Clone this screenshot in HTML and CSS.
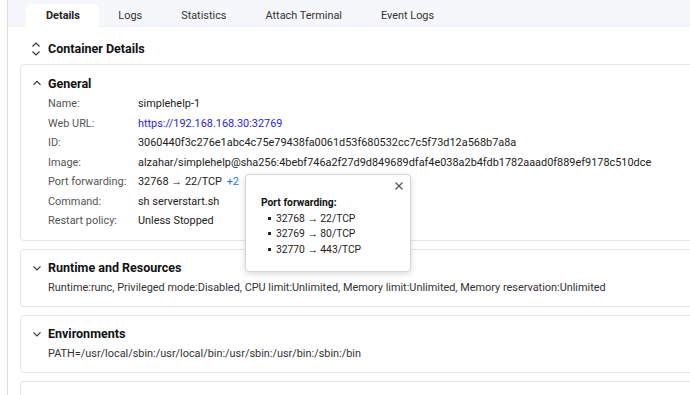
FILE: index.html
```html
<!DOCTYPE html>
<html lang="en">
<head>
    <meta charset="UTF-8">
    <meta name="viewport" content="width=device-width, initial-scale=1.0">
    <title>Container simplehelp-1</title>
    <link rel="stylesheet" href="styles.css">
</head>
<body>
    <div class="panel">
        <div class="tabs">
            <button class="tab active">Details</button>
            <button class="tab">Logs</button>
            <button class="tab">Statistics</button>
            <button class="tab">Attach Terminal</button>
            <button class="tab">Event Logs</button>
        </div>

        <div class="page-title">
            <svg class="expand-icon" width="10" height="16" viewBox="0 0 10 16">
                <path d="M1.5 5.5 L5 2 L8.5 5.5 M1.5 10.5 L5 14 L8.5 10.5" fill="none" stroke="#333" stroke-width="1.2"/>
            </svg>
            <h1>Container Details</h1>
        </div>

        <div class="card">
            <div class="card-head">
                <svg class="chevron" width="10" height="10" viewBox="0 0 10 10">
                    <path d="M1.5 6.8 L5 3.3 L8.5 6.8" fill="none" stroke="#333" stroke-width="1.2"/>
                </svg>
                <h2>General</h2>
            </div>
            <div class="rows">
                <div class="row"><span class="label">Name:</span><span class="value">simplehelp-1</span></div>
                <div class="row"><span class="label">Web URL:</span><a class="value link" href="#">https://192.168.168.30:32769</a></div>
                <div class="row"><span class="label">ID:</span><span class="value">3060440f3c276e1abc4c75e79438fa0061d53f680532cc7c5f73d12a568b7a8a</span></div>
                <div class="row"><span class="label">Image:</span><span class="value">alzahar/simplehelp@sha256:4bebf746a2f27d9d849689dfaf4e038a2b4fdb1782aaad0f889ef9178c510dce</span></div>
                <div class="row">
                    <span class="label">Port forwarding:</span>
                    <span class="value">32768 &#8594; 22/TCP <span class="more">+2
                        <div class="popup">
                            <svg class="close" width="8" height="8" viewBox="0 0 8 8">
                                <path d="M0.5 0.5 L7.5 7.5 M7.5 0.5 L0.5 7.5" stroke="#555" stroke-width="1.2"/>
                            </svg>
                            <div class="popup-title">Port forwarding:</div>
                            <ul>
                                <li>32768 &#8594; 22/TCP</li>
                                <li>32769 &#8594; 80/TCP</li>
                                <li>32770 &#8594; 443/TCP</li>
                            </ul>
                        </div>
                    </span></span>
                </div>
                <div class="row"><span class="label">Command:</span><span class="value">sh serverstart.sh</span></div>
                <div class="row"><span class="label">Restart policy:</span><span class="value">Unless Stopped</span></div>
            </div>
        </div>

        <div class="card">
            <div class="card-head">
                <svg class="chevron" width="10" height="10" viewBox="0 0 10 10">
                    <path d="M1.5 3.3 L5 6.8 L8.5 3.3" fill="none" stroke="#333" stroke-width="1.2"/>
                </svg>
                <h2>Runtime and Resources</h2>
            </div>
            <div class="summary">Runtime:runc, Privileged mode:Disabled, CPU limit:Unlimited, Memory limit:Unlimited, Memory reservation:Unlimited</div>
        </div>

        <div class="card">
            <div class="card-head">
                <svg class="chevron" width="10" height="10" viewBox="0 0 10 10">
                    <path d="M1.5 3.3 L5 6.8 L8.5 3.3" fill="none" stroke="#333" stroke-width="1.2"/>
                </svg>
                <h2>Environments</h2>
            </div>
            <div class="summary">PATH=/usr/local/sbin:/usr/local/bin:/usr/sbin:/usr/bin:/sbin:/bin</div>
        </div>

        <div class="card">
            <div class="card-head">
                <h2>&nbsp;</h2>
            </div>
        </div>
    </div>
</body>
</html>
```

FILE: styles.css
```css
* {
    margin: 0;
    padding: 0;
    box-sizing: border-box;
    font-family: Roboto, "Liberation Sans", Arial, sans-serif;
}

html, body {
    overflow: hidden;
    height: 100%;
}

body {
    background: #fff;
    color: #202124;
}

.panel {
    margin-left: 7px;
    border-left: 1px solid #dedede;
    min-height: 100%;
    margin-right: -12px;
}

.tabs {
    display: flex;
    background: #f5f7fa;
    height: 27px;
    padding: 4px 0 0 18px;
    border-bottom: 1px solid #eef0f3;
}

.tab {
    border: none;
    background: none;
    font-size: 10.9px;
    color: #333;
    padding: 0 19.5px;
    height: 23px;
    cursor: pointer;
}

.tab.active {
    background: #fff;
    font-weight: bold;
    color: #222;
    border-radius: 6px 6px 0 0;
    padding: 0 19px 0 20px;
}

.page-title {
    display: flex;
    align-items: center;
    gap: 7px;
    padding: 6px 0 0 23px;
    height: 37px;
}

.page-title h1 {
    font-size: 12.5px;
    font-weight: bold;
    color: #111;
}

.card {
    margin: 0 0 8px 12px;
    border: 1px solid #e6e6e6;
    border-radius: 4px;
    padding: 9px 0 9px 0;
    background: #fff;
}

.card-head {
    display: flex;
    align-items: center;
    gap: 6px;
    padding-left: 11px;
    height: 18px;
}

.card-head h2 {
    font-size: 12.5px;
    font-weight: bold;
    color: #111;
}

.rows {
    padding: 2px 0 0 27px;
}

.row {
    display: flex;
    font-size: 10.9px;
    line-height: 19.5px;
}

.label {
    width: 90px;
    color: #555;
    flex-shrink: 0;
}

.value {
    color: #222;
    white-space: nowrap;
}

.link {
    color: #2a1de8;
    text-decoration: none;
}

.more {
    position: relative;
    color: #1976d2;
    margin-left: 2px;
}

.popup {
    position: absolute;
    left: calc(100% + 6px);
    top: -1px;
    width: 166px;
    height: 98px;
    background: #fff;
    border: 1px solid #d6d6d6;
    border-radius: 4px;
    box-shadow: 0 2px 6px rgba(0,0,0,0.15);
    padding: 20px 0 0 15px;
    color: #222;
    font-size: 10.3px;
    line-height: 15.5px;
}

.close {
    position: absolute;
    right: 7px;
    top: 7px;
}

.popup-title {
    font-weight: bold;
    color: #111;
}

.popup ul {
    list-style: none;
    padding-left: 7px;
}

.popup li {
    display: flex;
    align-items: center;
}

.popup li::before {
    content: "";
    width: 3px;
    height: 3px;
    background: #222;
    margin-right: 5px;
}

.summary {
    font-size: 10.9px;
    line-height: 19px;
    padding-left: 27px;
    margin-top: 1px;
    color: #333;
}
```
